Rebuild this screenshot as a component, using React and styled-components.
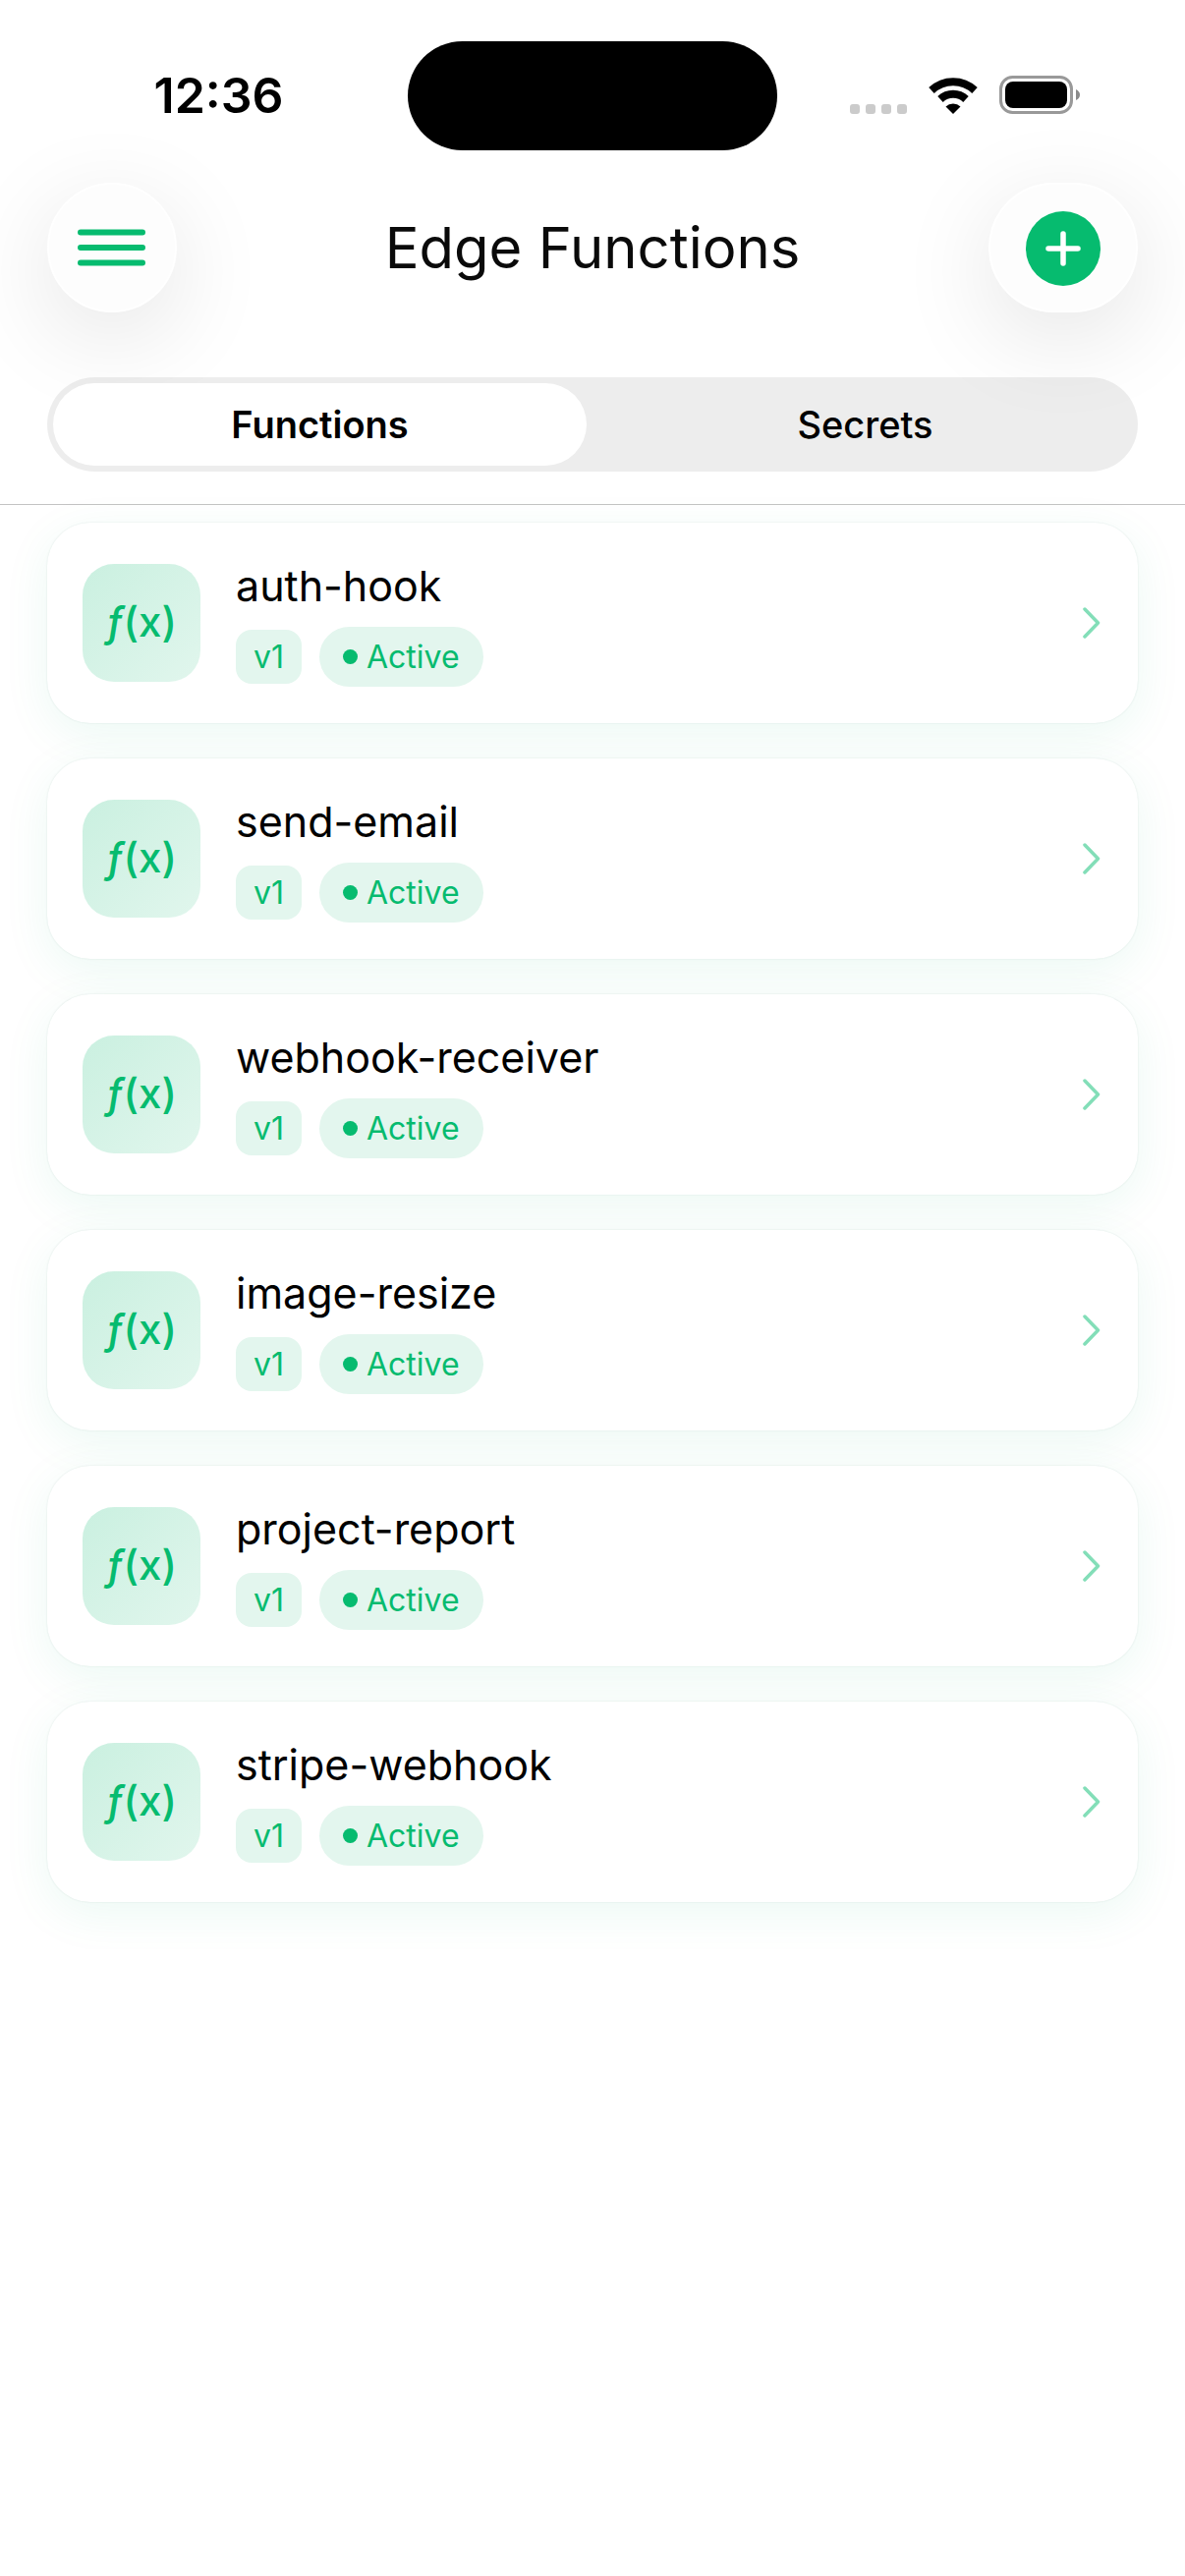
import { useState } from "react";
import styled, { createGlobalStyle } from "styled-components";

const GlobalStyle = createGlobalStyle`
    *{
        box-sizing: border-box;
    }
    body{
        margin: 0;
        background-color: white;
        color: black;
        font-family: Inter, "Liberation Sans", sans-serif;
    }
    button{
        font-family: inherit;
        border: none;
        padding: 0;
        cursor: pointer;
    }
`;

const Top = styled.header`
    border-bottom: 1px solid #c3c3c3;
    padding-bottom: 33px;
    overflow: hidden;
`;

const StatusBar = styled.div`
    display: grid;
    grid-template-columns: 1fr auto 1fr;
    align-items: center;
    padding: 41px 48px 0;
`;

const Clock = styled.time`
    justify-self: center;
    padding-right: 18px;
    font-size: 50px;
    font-weight: 600;
    line-height: 112px;
`;

const Island = styled.div`
    width: 376px;
    height: 111px;
    border-radius: 56px;
    background-color: black;
`;

const StatusIcons = styled.div`
    justify-self: end;
    display: flex;
    align-items: center;
    gap: 22px;
    padding-right: 59px;
`;

const NavBar = styled.div`
    display: grid;
    grid-template-columns: 1fr auto 1fr;
    align-items: center;
    padding: 33px 48px 66px;
`;

const RoundButton = styled.button`
    display: flex;
    align-items: center;
    justify-content: center;
    justify-self: ${(props) => props.$side};
    width: ${(props) => (props.$wide ? "152px" : "132px")};
    height: 132px;
    border-radius: 66px;
    border: 2px solid white;
    background-color: #fdfdfd;
    box-shadow: 0 24px 100px rgba(0, 0, 0, 0.11);
`;

const Title = styled.h1`
    margin: 0;
    font-size: 58px;
    font-weight: 400;
    line-height: 72px;
    color: #0a0a0a;
`;

const Tabs = styled.div`
    position: relative;
    display: flex;
    gap: 12px;
    margin: 0 48px;
    padding: 6px;
    border-radius: 48px;
    background-color: rgba(0, 0, 0, 0.07);
`;

const Tab = styled.button`
    flex: 1;
    height: 84px;
    border-radius: 42px;
    background-color: ${(props) => (props.$active ? "white" : "transparent")};
    color: black;
    font-size: 38px;
    font-weight: ${(props) => (props.$active ? 600 : 500)};
`;

const List = styled.main`
    display: flex;
    flex-direction: column;
    gap: 36px;
    padding: 18px 48px 48px;
`;

const Card = styled.a`
    display: flex;
    align-items: center;
    gap: 36px;
    height: 204px;
    padding: 0 36px;
    border-radius: 44px;
    background-color: white;
    box-shadow: 0 0 2px rgba(0, 80, 60, 0.12), 0 12px 48px rgba(0, 184, 110, 0.08);
    color: black;
    text-decoration: none;
`;

const FunctionIcon = styled.span`
    display: flex;
    align-items: center;
    justify-content: center;
    width: 120px;
    height: 120px;
    padding-bottom: 4px;
    border-radius: 32px;
    background: linear-gradient(135deg, #caf0e0, #e1f6ed);
    color: #06bb6f;
    font-size: 42px;
    font-weight: 500;
`;

const Details = styled.div`
    flex: 1;
    display: flex;
    flex-direction: column;
    gap: 16px;
`;

const Name = styled.h2`
    margin: 0;
    font-size: 43px;
    font-weight: 400;
    line-height: 52px;
`;

const Badges = styled.div`
    display: flex;
    align-items: center;
    gap: 18px;
    font-size: 32px;
    color: #06bb6f;
`;

const Version = styled.span`
    padding: 0 18px;
    border-radius: 16px;
    background-color: #e3f6ee;
    line-height: 55px;
`;

const Status = styled.span`
    display: flex;
    align-items: center;
    gap: 9px;
    padding: 0 24px;
    border-radius: 31px;
    background-color: #e3f6ee;
    line-height: 61px;
`;

const Dot = styled.span`
    width: 15px;
    height: 15px;
    border-radius: 50%;
    background-color: #06bb6f;
`;

const SignalIcon = () => (
  <svg width="58" height="40" viewBox="0 0 58 40" fill="#cbcbcb">
    <rect x="0" y="29" width="10" height="10" rx="3" />
    <rect x="16" y="29" width="10" height="10" rx="3" />
    <rect x="32" y="29" width="10" height="10" rx="3" />
    <rect x="48" y="29" width="10" height="10" rx="3" />
  </svg>
);

const WifiIcon = () => (
  <svg width="50" height="38" viewBox="0 0 50 38">
    <path d="M3 14 A32 32 0 0 1 47 14" fill="none" stroke="black" strokeWidth="8" />
    <path d="M12 23 A19 19 0 0 1 38 23" fill="none" stroke="black" strokeWidth="8" />
    <path d="M25 38 L17.5 30.5 A11 11 0 0 1 32.5 30.5 Z" fill="black" />
  </svg>
);

const BatteryIcon = () => (
  <svg width="82" height="40" viewBox="0 0 82 40">
    <rect x="1.5" y="1.5" width="72" height="36" rx="12" fill="none" stroke="#999" strokeWidth="3" />
    <rect x="6" y="6" width="63" height="27" rx="8" fill="black" />
    <path d="M78 14 Q82 16 82 19.5 Q82 23 78 25 Z" fill="#8a8a8a" />
  </svg>
);

const MenuIcon = () => (
  <svg width="70" height="40" viewBox="0 0 70 40" stroke="#06bb6f" strokeWidth="6" strokeLinecap="round">
    <path d="M3 4.5H66M3 20H66M3 35.5H66" />
  </svg>
);

const AddIcon = () => (
  <svg width="76" height="78" viewBox="0 0 76 78">
    <circle cx="38" cy="40" r="38" fill="#06bb6f" />
    <path d="M38 25V55M23 40H53" stroke="white" strokeWidth="5.5" strokeLinecap="round" />
  </svg>
);

const ChevronIcon = () => (
  <svg width="20" height="32" viewBox="0 0 20 32" fill="none" stroke="#83deb8" strokeWidth="3.5" strokeLinecap="round" strokeLinejoin="round">
    <path d="M2 2L15.5 16L2 30" />
  </svg>
);

const functions = [
  "auth-hook",
  "send-email",
  "webhook-receiver",
  "image-resize",
  "project-report",
  "stripe-webhook",
];

const FunctionCard = ({ name }) => {
  return (
    <Card href={`#${name}`}>
      <FunctionIcon aria-hidden="true"><i>ƒ</i>(x)</FunctionIcon>
      <Details>
        <Name>{name}</Name>
        <Badges>
          <Version>v1</Version>
          <Status><Dot />Active</Status>
        </Badges>
      </Details>
      <ChevronIcon />
    </Card>
  );
};

export default function App() {
  const [tab, setTab] = useState("Functions");

  return (
    <>
      <GlobalStyle />
      <Top>
        <StatusBar>
          <Clock>12:36</Clock>
          <Island />
          <StatusIcons>
            <SignalIcon />
            <WifiIcon />
            <BatteryIcon />
          </StatusIcons>
        </StatusBar>
        <NavBar>
          <RoundButton $side="start" aria-label="Menu">
            <MenuIcon />
          </RoundButton>
          <Title>Edge Functions</Title>
          <RoundButton $side="end" $wide aria-label="Add">
            <AddIcon />
          </RoundButton>
        </NavBar>
        <Tabs role="tablist">
          {["Functions", "Secrets"].map((label) => (
            <Tab
              key={label}
              role="tab"
              aria-selected={tab === label}
              $active={tab === label}
              onClick={() => setTab(label)}
            >
              {label}
            </Tab>
          ))}
        </Tabs>
      </Top>
      <List>
        {functions.map((name) => (
          <FunctionCard key={name} name={name} />
        ))}
      </List>
    </>
  );
}
